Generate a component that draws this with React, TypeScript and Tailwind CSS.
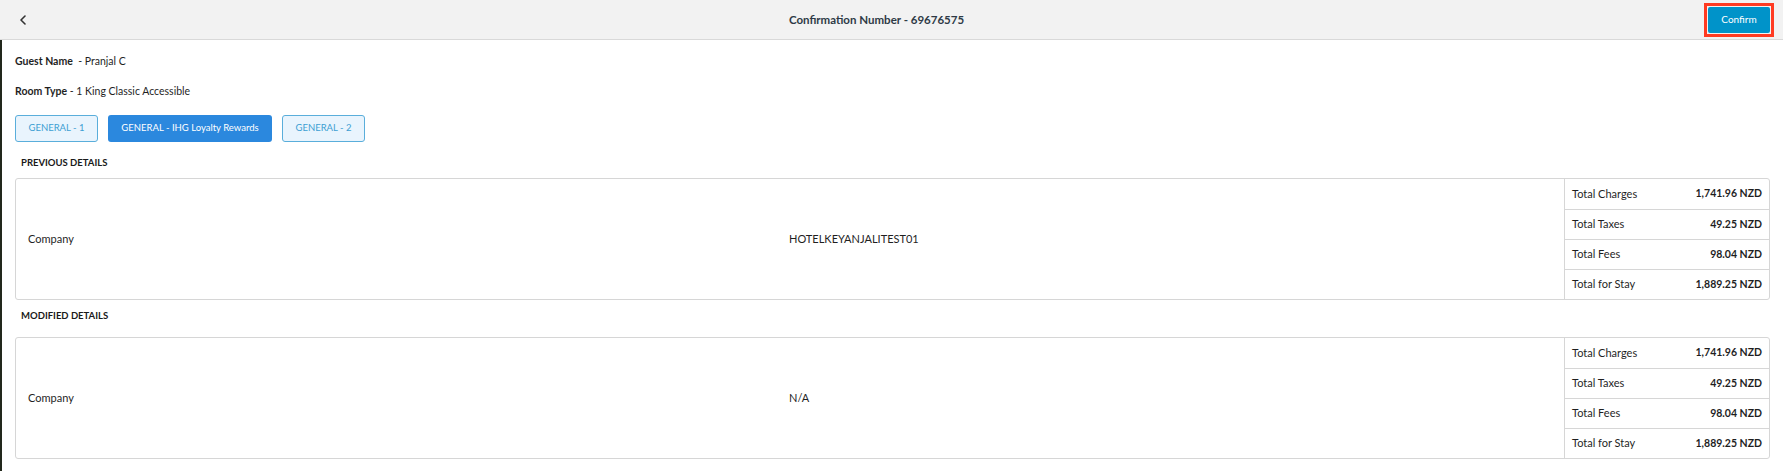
import React from "react";

type Summary = { label: string; value: string };

const totals: Summary[] = [
    { label: "Total Charges", value: "1,741.96 NZD" },
    { label: "Total Taxes", value: "49.25 NZD" },
    { label: "Total Fees", value: "98.04 NZD" },
    { label: "Total for Stay", value: "1,889.25 NZD" },
];

const tabs = ["GENERAL - 1", "GENERAL - IHG Loyalty Rewards", "GENERAL - 2"];

const DetailsBox = ({ company }: { company: string }) => (
    <div className="flex rounded-[3px] border border-[#d6d6d6]">
        <div className="flex flex-1 items-center text-[11px] text-[#1f1f1f]">
            <div className="w-[761px] pl-3">Company</div>
            <div className="pl-3">{company}</div>
        </div>
        <div className="w-[205px] border-l border-[#d6d6d6]">
            {totals.map((row, i) => (
                <div
                    key={row.label}
                    className={`flex h-[30px] items-center justify-between px-[7px] text-[#1f1f1f] ${
                        i > 0 ? "border-t border-[#d6d6d6]" : ""
                    }`}
                >
                    <span className="text-[11px]">{row.label}</span>
                    <span className="text-[10.5px] font-bold">{row.value}</span>
                </div>
            ))}
        </div>
    </div>
);

export default function App() {
    return (
        <div className="min-h-[471px] bg-white font-['Lato','Liberation_Sans',sans-serif]">
            <header className="flex h-[40px] items-center justify-between border-b border-[#d9d9d9] bg-[#f2f2f2] pl-[19px] pr-[9px]">
                <button className="flex h-[20px] w-[30px] items-center">
                    <svg width="7" height="10" viewBox="0 0 7 10" fill="none">
                        <polyline
                            points="6,1 2,5 6,9"
                            stroke="#333"
                            strokeWidth="1.6"
                            strokeLinecap="round"
                            strokeLinejoin="round"
                        />
                    </svg>
                </button>
                <h1 className="text-[11.5px] font-bold text-[#2e3a46]">
                    Confirmation Number - 69676575
                </h1>
                <div className="border-[3px] border-[#ff3b22] p-[1px]">
                    <button className="flex h-[26px] w-[62px] items-center justify-center rounded-[2px] bg-[#0093c9] text-[10px] text-white">
                        Confirm
                    </button>
                </div>
            </header>

            <main className="border-l-2 border-[#22281c] pb-[14px] pl-[13px] pr-[13px]">
                <p className="pt-[12px] text-[10.5px] leading-[18px] text-[#1f1f1f]">
                    <span className="font-bold">Guest Name</span>&nbsp; - Pranjal C
                </p>
                <p className="mt-[12px] text-[10.5px] leading-[18px] text-[#1f1f1f]">
                    <span className="font-bold">Room Type</span> - 1 King Classic Accessible
                </p>

                <div className="mt-[15px] flex gap-[10px]">
                    {tabs.map((tab, i) =>
                        i === 1 ? (
                            <button
                                key={tab}
                                className="h-[27px] w-[164px] rounded-[3px] bg-[#2b88de] text-[9.5px] text-white"
                            >
                                {tab}
                            </button>
                        ) : (
                            <button
                                key={tab}
                                className="h-[27px] w-[83px] rounded-[3px] border border-[#5aaedb] bg-[#e9f4fd] text-[9.5px] text-[#3d9fd3]"
                            >
                                {tab}
                            </button>
                        )
                    )}
                </div>

                <h2 className="mt-[14px] pl-[6px] text-[9.5px] leading-[14px] font-bold text-[#1a1a1a]">
                    PREVIOUS DETAILS
                </h2>
                <div className="mt-[8px]">
                    <DetailsBox company="HOTELKEYANJALITEST01" />
                </div>

                <h2 className="mt-[9px] pl-[6px] text-[9.5px] leading-[14px] font-bold text-[#1a1a1a]">
                    MODIFIED DETAILS
                </h2>
                <div className="mt-[14px]">
                    <DetailsBox company="N/A" />
                </div>
            </main>
        </div>
    );
}
